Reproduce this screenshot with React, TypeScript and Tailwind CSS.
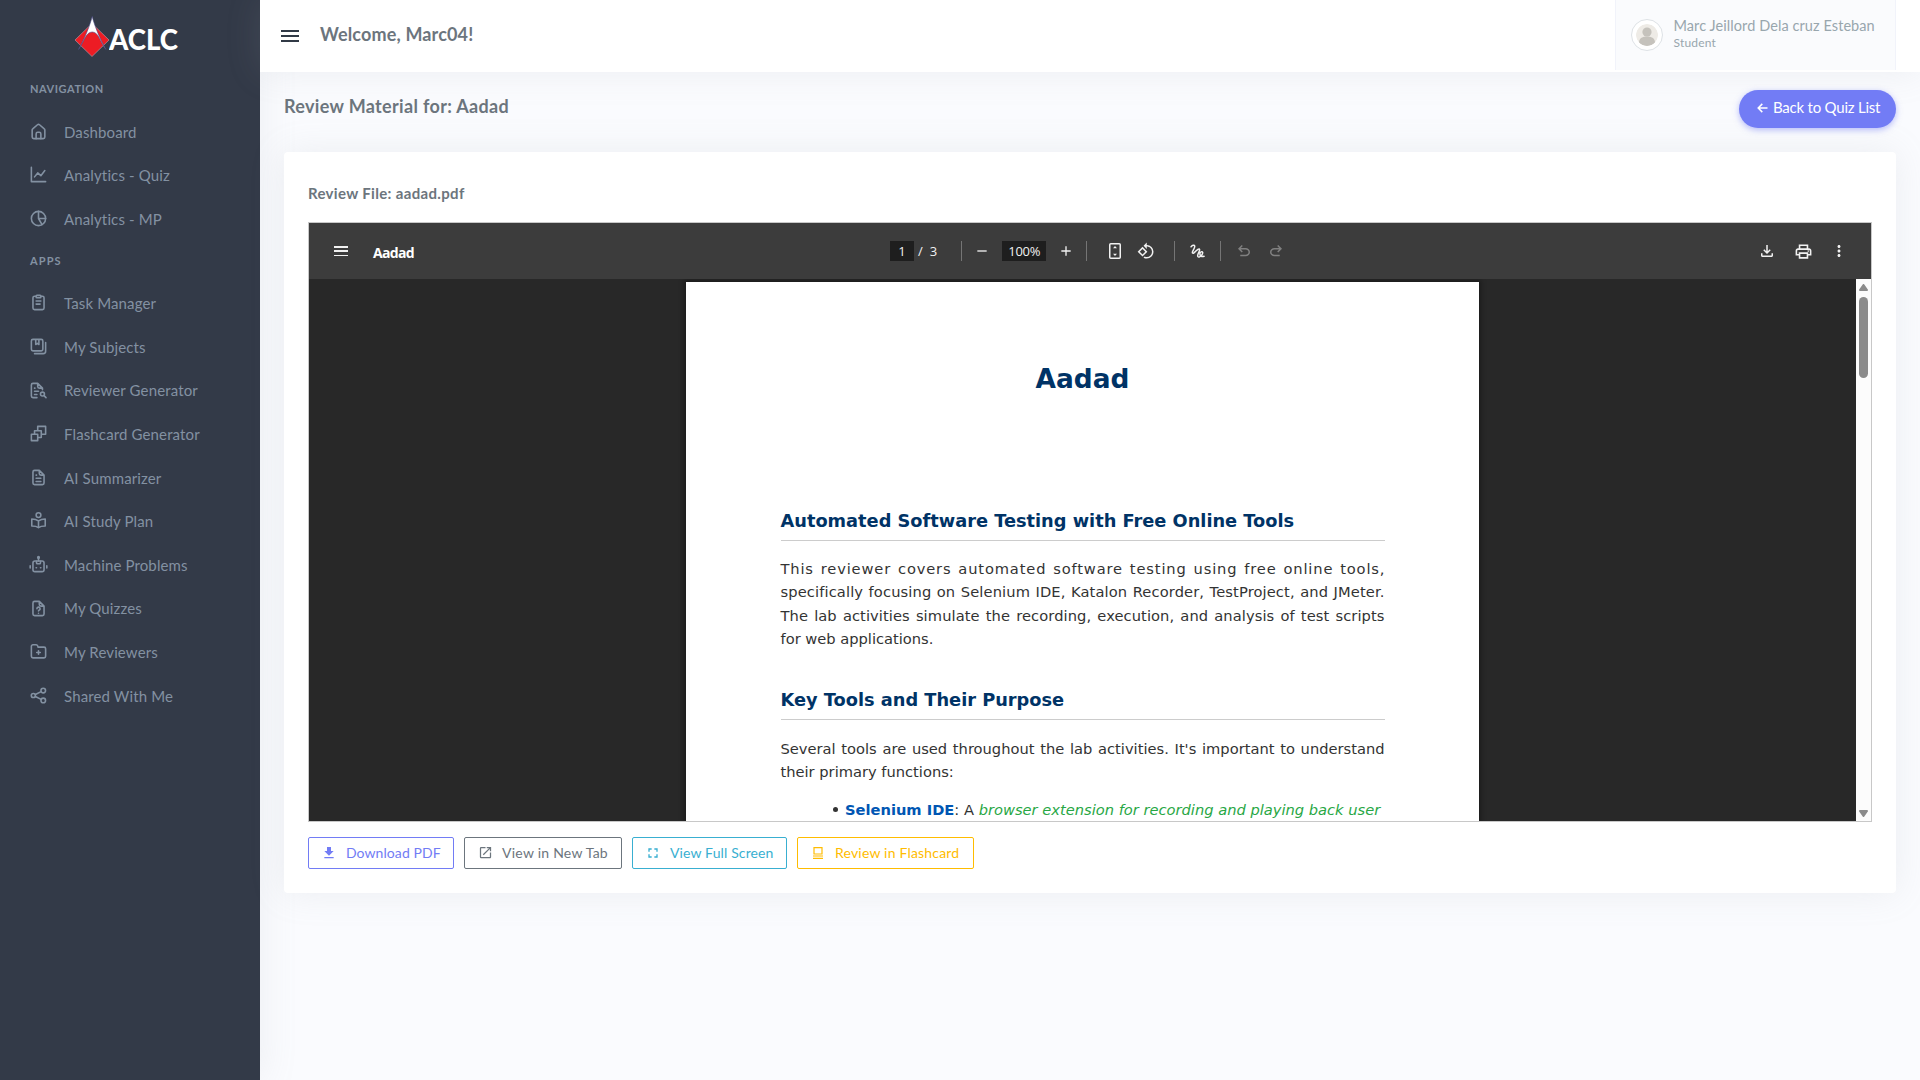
import React from "react";
import {
  MdAdd,
  MdDownload,
  MdFullscreen,
  MdMoreVert,
  MdOpenInNew,
  MdOutlineFileDownload,
  MdOutlinePrint,
  MdRemove,
  MdRotate90DegreesCcw,
} from "react-icons/md";

type IconProps = { children: React.ReactNode; className?: string };

function Line({ children, className = "size-[19px]" }: IconProps) {
  return (
    <svg
      viewBox="0 0 24 24"
      fill="none"
      stroke="currentColor"
      strokeWidth="2"
      strokeLinecap="round"
      strokeLinejoin="round"
      className={className}
    >
      {children}
    </svg>
  );
}

const icons = {
  home: (
    <Line>
      <path d="M4 10.2c0-.6.2-1.1.7-1.500l6-5.200a2 2 0 0 1 2.600 0l6 5.200c.5.4.7.9.7 1.500V19a2 2 0 0 1-2 2H6a2 2 0 0 1-2-2z" />
      <path d="M9 21v-6a2 2 0 0 1 2-2h2a2 2 0 0 1 2 2v6" />
    </Line>
  ),
  chartLine: (
    <Line>
      <path d="M3 3v18h18M7 15l4-5 4 3.500 5-6.500" />
    </Line>
  ),
  pie: (
    <Line>
      <circle cx="12" cy="12" r="9" />
      <path d="M12 3v9h9M12 12l4.500 7.800" />
    </Line>
  ),
  clipboard: (
    <Line>
      <path d="M8.500 4H7a2 2 0 0 0-2 2v13a2 2 0 0 0 2 2h10a2 2 0 0 0 2-2V6a2 2 0 0 0-2-2h-1.500M9 10h6M9 14h5" />
      <path d="M10 3h4a1 1 0 0 1 1 1v1a1 1 0 0 1-1 1h-4a1 1 0 0 1-1-1V4a1 1 0 0 1 1-1z" />
    </Line>
  ),
  books: (
    <Line>
      <rect x="3" y="3" width="14.500" height="14.500" rx="2" />
      <path d="M8.500 3.500v6l2-1.500 2 1.500v-6M21 7v11a3 3 0 0 1-3 3H7" />
    </Line>
  ),
  fileSearch: (
    <Line>
      <path d="M10 21H5a2 2 0 0 1-2-2V5a2 2 0 0 1 2-2h6l6 6v2M11 3v4a2 2 0 0 0 2 2h4M7 13h5M7 17h3M7 9h.5" />
      <circle cx="17" cy="16.500" r="2.500" />
      <path d="M19 18.500l2.500 2.500" />
    </Line>
  ),
  layers: (
    <Line>
      <path d="M3 13h8v8H3zM7 13V8.500h8.500V17H11M11 8.500V3h10v10h-5.500" />
    </Line>
  ),
  fileText: (
    <Line>
      <path d="M13 3H7a2 2 0 0 0-2 2v14a2 2 0 0 0 2 2h10a2 2 0 0 0 2-2V9zM13 3v4a2 2 0 0 0 2 2h4M9 9h.5M9 13h6M9 17h6" />
    </Line>
  ),
  reader: (
    <Line>
      <circle cx="12" cy="5.200" r="3" />
      <path d="M12 12.500C10 11 7 10 3.500 10v9c3.500 0 6.500.500 8.500 2 2-1.500 5-2 8.500-2v-9c-3.500 0-6.500 1-8.500 2.500zM12 12.500V21" />
    </Line>
  ),
  robot: (
    <Line>
      <rect x="5" y="7.500" width="14" height="13.500" rx="2.500" />
      <path d="M12 2.500v5M9.500 8v2a1 1 0 0 0 1 1h3a1 1 0 0 0 1-1V8M9 16h.5M14.500 16h.5M1.500 13.500v3M22.500 13.500v3" />
      <circle cx="12" cy="3" r="1" />
    </Line>
  ),
  fileQuestion: (
    <Line>
      <path d="M13 3H7a2 2 0 0 0-2 2v14a2 2 0 0 0 2 2h10a2 2 0 0 0 2-2V9zM13 3v4a2 2 0 0 0 2 2h4" />
      <path d="M10 12.200a2 2 0 1 1 2.700 1.900c-.5.200-.7.500-.7.900M12 18v.1" />
    </Line>
  ),
  folderPlus: (
    <Line>
      <path d="M5 3.500h4a2 2 0 0 1 1.900 1.300l.6 1.700H19a2 2 0 0 1 2 2V18a2 2 0 0 1-2 2H5a2 2 0 0 1-2-2V5.500a2 2 0 0 1 2-2zM12 11v4.500M9.800 13.200h4.500" />
    </Line>
  ),
  share: (
    <Line>
      <circle cx="5.500" cy="12" r="2.600" />
      <circle cx="18" cy="5.800" r="2.900" />
      <circle cx="18" cy="18.200" r="2.900" />
      <path d="M8 10.800l7.300-3.700M8 13.200l7.300 3.700" />
    </Line>
  ),
};

const navigation = [
  { label: "Dashboard", icon: icons.home },
  { label: "Analytics - Quiz", icon: icons.chartLine },
  { label: "Analytics - MP", icon: icons.pie },
];

const apps = [
  { label: "Task Manager", icon: icons.clipboard },
  { label: "My Subjects", icon: icons.books },
  { label: "Reviewer Generator", icon: icons.fileSearch },
  { label: "Flashcard Generator", icon: icons.layers },
  { label: "AI Summarizer", icon: icons.fileText },
  { label: "AI Study Plan", icon: icons.reader },
  { label: "Machine Problems", icon: icons.robot },
  { label: "My Quizzes", icon: icons.fileQuestion },
  { label: "My Reviewers", icon: icons.folderPlus },
  { label: "Shared With Me", icon: icons.share },
];

function NavList({ items }: { items: typeof apps }) {
  return (
    <ul>
      {items.map((item) => (
        <li key={item.label} className="flex h-[43.650px] items-center pl-[29px] text-[15px] tracking-[0.130px]">
          <span className="mb-[1px]">{item.icon}</span>
          <span className="ml-4 whitespace-nowrap">{item.label}</span>
        </li>
      ))}
    </ul>
  );
}

function Logo() {
  return (
    <div className="flex h-[72px] items-start pl-[75px] pt-4">
      <svg viewBox="0 0 34 42" className="h-[42px] w-[34px] shrink-0">
        <path d="M17 7.500L34 24 17 40.500 0 24z" fill="#ed1c24" stroke="#b9a3ad" strokeWidth=".6" />
        <path
          d="M17.200 .500C15 9 10 22 3.500 33.500 9 26 10.500 16 17.200 16S25 26 30.900 33.500C24.400 22 19.400 9 17.200 .500z"
          fill="#fff"
          stroke="#4a4a86"
          strokeWidth=".6"
        />
      </svg>
      <svg viewBox="0 0 76 44" className="h-[44px] w-[76px] shrink-0">
        <text
          x="0"
          y="33.500"
          textLength="69"
          lengthAdjust="spacingAndGlyphs"
          fill="#fff"
          className="font-['Lato',sans-serif] text-[29px] font-black"
        >
          ACLC
        </text>
      </svg>
    </div>
  );
}

function Sidebar() {
  return (
    <aside className="w-[260px] shrink-0 bg-[#333a48] text-[#8391a2] shadow-[0_0_35px_0_rgba(154,161,171,0.15)]">
      <Logo />
      <h2 className="flex h-[38px] items-center pb-[5px] pl-[30px] text-[11px] font-bold leading-4 tracking-[0.540px]">NAVIGATION</h2>
      <NavList items={navigation} />
      <h2 className="flex h-[40.500px] items-center pb-[1px] pl-[30px] text-[11px] font-bold leading-4 tracking-[1.100px]">APPS</h2>
      <NavList items={apps} />
    </aside>
  );
}

function Header() {
  return (
    <header className="relative flex h-[72px] items-start bg-white pl-[21px] pr-6 shadow-[0_0_35px_0_rgba(154,161,171,0.15)]">
      <div className="mt-[30px] flex h-3 w-[18px] flex-col justify-between">
        <span className="h-[2px] bg-[#313a46]" />
        <span className="h-[2px] bg-[#313a46]" />
        <span className="h-[2px] bg-[#313a46]" />
      </div>
      <h1 className="ml-[21px] mt-[22px] text-[18px] font-bold leading-6 tracking-[0.150px] text-[#6c757d]">Welcome, Marc04!</h1>
      <div className="ml-auto flex h-[70px] w-[281px] border-x border-[#f1f3fa] bg-[#fafbfd] pl-[15px] text-[#98a6ad]">
        <div className="mt-[19px] flex size-8 items-center justify-center rounded-full border border-[#dee2e6] bg-white">
          <svg viewBox="0 0 22 22" className="size-[22px] rounded-full">
            <circle cx="11" cy="11" r="11" fill="#eeebe6" />
            <circle cx="11" cy="8" r="4.600" fill="#c5c2bc" />
            <path d="M3 18.500c0-4.500 4-6 8-6s8 1.500 8 6A11 11 0 0 1 11 22a11 11 0 0 1-8-3.500z" fill="#c5c2bc" />
          </svg>
        </div>
        <div className="ml-[10.500px] mt-[16px] whitespace-nowrap">
          <div className="text-[14.500px] leading-5 tracking-[0.080px]">Marc Jeillord Dela cruz Esteban</div>
          <div className="text-[12px] leading-[14px] tracking-[0.180px]">Student</div>
        </div>
      </div>
    </header>
  );
}

function Separator({ className }: { className: string }) {
  return <span className={`h-5 w-px shrink-0 bg-[#757575] ${className}`} />;
}

function PdfToolbar() {
  return (
    <div className="flex h-14 items-center bg-[#3c3c3c] font-['Open_Sans',sans-serif] text-white">
      <div className="flex flex-1 items-center pl-[25px]">
        <div className="flex h-[10px] w-[14px] flex-col justify-between">
          <span className="h-[1.500px] bg-[#f1f1f1]" />
          <span className="h-[1.500px] bg-[#f1f1f1]" />
          <span className="h-[1.500px] bg-[#f1f1f1]" />
        </div>
        <span className="ml-[25px] mt-[3px] text-[14px] font-bold leading-5 tracking-[-0.650px]">Aadad</span>
      </div>
      <div className="mr-[6px] flex w-[396px] shrink-0 items-center text-[13px] leading-5 text-[#f1f1f1]">
        <span className="h-5 w-6 bg-[#1e1e1e] text-center">1</span>
        <span className="ml-[4px]">/</span>
        <span className="ml-[7px]">3</span>
        <Separator className="ml-[24px]" />
        <MdRemove className="ml-[12px] size-4 shrink-0" />
        <span className="ml-[12px] h-5 w-11 shrink-0 bg-[#1e1e1e] text-center tracking-[-0.300px]">100%</span>
        <MdAdd className="ml-[12px] size-4 shrink-0" />
        <Separator className="ml-[12px]" />
        <svg viewBox="0 0 12 16" className="ml-[22px] h-4 w-3 shrink-0" fill="none" stroke="currentColor" strokeWidth="1.500">
          <rect x=".75" y=".75" width="10.500" height="14.500" rx="1" />
          <path d="M6 3l2 2.300H4zM6 13l2-2.300H4z" fill="currentColor" stroke="none" />
        </svg>
        <MdRotate90DegreesCcw className="ml-[16px] size-[18px] shrink-0" />
        <Separator className="ml-[19px]" />
        <svg viewBox="0 0 15 15" className="ml-[15px] size-[15px] shrink-0" fill="none" stroke="currentColor" strokeWidth="1.500" strokeLinecap="round">
          <path d="M1 2.800C2 1.200 4.300.600 4.700 2 5.200 4.300 1.500 7.600 2.500 9 4 10.500 7.600 4 9.300 5 11 6.200 6.800 10 7.800 12.300 9.200 14.500 13 10.500 12.700 8.500 12.200 7 9.900 8 9.900 9.800 9.900 12 11.500 13 14 12.300" />
        </svg>
        <Separator className="ml-[15px]" />
        <svg viewBox="0 0 24 24" className="ml-[14px] size-[18px] shrink-0 text-[#808080]" fill="currentColor">
          <path d="M7 19v-2h7.100q1.575 0 2.738-1T18 13.500T16.838 11T14.100 10H7.800l2.600 2.600L9 14L4 9l5-5l1.400 1.400L7.800 8h6.300q2.425 0 4.163 1.575T20 13.500t-1.737 3.925T14.100 19z" />
        </svg>
        <svg viewBox="0 0 24 24" className="ml-[14px] size-[18px] shrink-0 -scale-x-100 text-[#808080]" fill="currentColor">
          <path d="M7 19v-2h7.100q1.575 0 2.738-1T18 13.500T16.838 11T14.100 10H7.800l2.600 2.600L9 14L4 9l5-5l1.400 1.400L7.800 8h6.300q2.425 0 4.163 1.575T20 13.500t-1.737 3.925T14.100 19z" />
        </svg>
      </div>
      <div className="flex flex-1 items-center justify-end gap-[17.500px] pr-[23px] text-[#f1f1f1]">
        <MdOutlineFileDownload className="size-[18px]" />
        <MdOutlinePrint className="size-[19px]" />
        <MdMoreVert className="size-[18px]" />
      </div>
    </div>
  );
}

function SectionTitle({ children, className }: { children: React.ReactNode; className: string }) {
  return (
    <h3 className={`h-[34px] whitespace-nowrap border-b border-[#cccccc] text-[17.780px] font-bold leading-7 text-[#003366] ${className}`}>
      {children}
    </h3>
  );
}

function Justified({ children, className = "" }: { children: React.ReactNode; className?: string }) {
  return <span className={`block whitespace-nowrap [text-align-last:justify] ${className}`}>{children}</span>;
}

function PdfPage() {
  return (
    <div className="ml-[377px] mt-[3px] h-[539px] w-[793px] overflow-hidden bg-white px-[94.500px] pt-[77px] font-['DejaVu_Sans',sans-serif] text-[14.667px] leading-[23.470px] text-[#333333] shadow-[0_0_5px_2px_rgba(0,0,0,0.35)]">
      <h2 className="text-center text-[26.400px] font-bold leading-10 text-[#003366]">Aadad</h2>
      <SectionTitle className="mt-[108px]">Automated Software Testing with Free Online Tools</SectionTitle>
      <p className="mt-[16px]">
        <Justified className="mr-[-0.850px] tracking-[0.850px]">This reviewer covers automated software testing using free online tools,</Justified>
        <Justified className="tracking-[0.120px]">specifically focusing on Selenium IDE, Katalon Recorder, TestProject, and JMeter.</Justified>
        <Justified className="tracking-[0.080px]">The lab activities simulate the recording, execution, and analysis of test scripts</Justified>
        <span className="block">for web applications.</span>
      </p>
      <SectionTitle className="mt-[35px]">Key Tools and Their Purpose</SectionTitle>
      <p className="mt-[17px]">
        <Justified>Several tools are used throughout the lab activities. It&apos;s important to understand</Justified>
        <span className="block">their primary functions:</span>
      </p>
      <div className="mt-[14px] flex items-center pl-[52.500px]">
        <span className="size-[5px] rounded-full bg-[#333333]" />
        <span className="ml-[7px] whitespace-nowrap">
          <b className="text-[#0056b3]">Selenium IDE</b>: A <i className="text-[#28a745]">browser extension for recording and playing back user</i>
        </span>
      </div>
    </div>
  );
}

function PdfViewer() {
  return (
    <div className="mt-[18px] h-[600px] w-[1564px] border border-[#c8c8c8]">
      <PdfToolbar />
      <div className="flex h-[542px] overflow-hidden bg-[#282828]">
        <div className="flex-1 overflow-hidden">
          <PdfPage />
        </div>
        <div className="flex w-[15px] shrink-0 flex-col items-center bg-[#fcfcfc] pb-[4px] pt-[5px]">
          <svg viewBox="0 0 9 7" className="h-[7px] w-[9px]">
            <path d="M4.500 1L8 6H1z" fill="#8b8b8b" stroke="#8b8b8b" strokeWidth="2" strokeLinejoin="round" />
          </svg>
          <span className="mt-[6px] h-[81px] w-[9px] rounded-full bg-[#8b8b8b]" />
          <svg viewBox="0 0 9 7" className="mt-auto h-[7px] w-[9px]">
            <path d="M4.500 6L8 1H1z" fill="#8b8b8b" stroke="#8b8b8b" strokeWidth="2" strokeLinejoin="round" />
          </svg>
        </div>
      </div>
    </div>
  );
}

function Actions() {
  return (
    <div className="mt-[15px] flex gap-[10px] text-[14px] leading-[21px]">
      <button className="flex h-8 w-[146px] items-center rounded-[2px] border border-[#727cf5] pb-[1px] pl-[12px] text-[#727cf5]">
        <MdDownload className="size-4" />
        <span className="ml-[9px] tracking-[0.070px]">Download PDF</span>
      </button>
      <button className="flex h-8 w-[158px] items-center rounded-[2px] border border-[#6c757d] pb-[1px] pl-[13px] text-[#6c757d]">
        <MdOpenInNew className="size-[15px]" />
        <span className="ml-[9px] tracking-[0.240px]">View in New Tab</span>
      </button>
      <button className="flex h-8 w-[155px] items-center rounded-[2px] border border-[#39afd1] pb-[1px] pl-[12px] text-[#39afd1]">
        <MdFullscreen className="size-4" />
        <span className="ml-[9px] tracking-[0.130px]">View Full Screen</span>
      </button>
      <button className="flex h-8 w-[177px] items-center rounded-[2px] border border-[#ffbc00] pb-[1px] pl-[14px] text-[#ffbc00]">
        <svg viewBox="0 0 12 12" className="mr-[2px] size-3" fill="none" stroke="currentColor" strokeWidth="1.200">
          <path d="M2 .6h8v6.400H2zM1 9h10M1 11.300h10" />
        </svg>
        <span className="ml-[9px] tracking-[0.190px]">Review in Flashcard</span>
      </button>
    </div>
  );
}

export default function App() {
  return (
    <div className="flex h-[1080px] w-[1920px] overflow-hidden bg-[#fafbfe] font-['Lato',sans-serif] text-[#6c757d]">
      <Sidebar />
      <div className="min-w-0 flex-1">
        <Header />
        <main className="px-6">
          <div className="flex h-20 items-start justify-between">
            <h2 className="mt-[22px] text-[18px] font-bold leading-6 tracking-[0.330px]">Review Material for: Aadad</h2>
            <button className="relative mt-[18px] flex h-[38px] w-[157px] items-center rounded-full bg-[#727cf5] pb-[3px] pl-[18px] text-[15px] tracking-[-0.220px] text-white shadow-[0_2px_6px_0_rgba(114,124,245,0.5)]">
              <svg viewBox="0 0 11 10" className="mr-[5px] h-[10px] w-[11px]" fill="none" stroke="currentColor" strokeWidth="1.500">
                <path d="M10.500 5H1.500M5.300 .900L1.200 5l4.100 4.100" />
              </svg>
              Back to Quiz List
            </button>
          </div>
          <section className="h-[741px] rounded bg-white px-6 pt-[30px] shadow-[0_0_35px_0_rgba(154,161,171,0.15)]">
            <h3 className="text-[15px] font-bold leading-[22px] tracking-[0.330px]">Review File: aadad.pdf</h3>
            <PdfViewer />
            <Actions />
          </section>
        </main>
      </div>
    </div>
  );
}
